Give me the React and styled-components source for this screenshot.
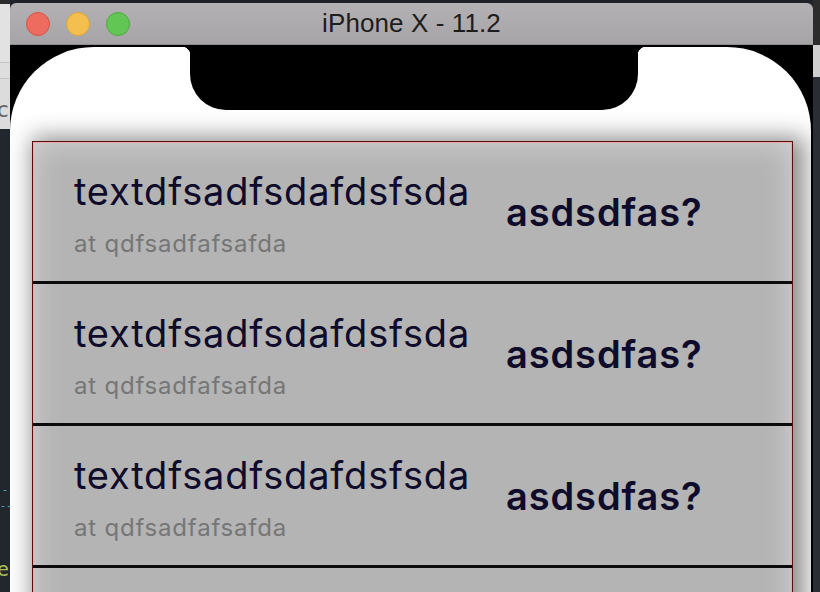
import React from 'react'
import styled, { createGlobalStyle } from 'styled-components'

const GlobalStyle = createGlobalStyle`
  html, body {
    margin: 0;
    padding: 0;
    background: #1f2228;
    overflow: hidden;
  }
`

const Desktop = styled.div`
  display: flex;
  height: 592px;
  overflow: hidden;
  background: #1f2228;
`

const EditorStrip = styled.div`
  width: ${p => p.width}px;
  flex: ${p => (p.grow ? 1 : 'none')};
  display: flex;
  flex-direction: column;
  overflow: hidden;
`

const EditorPane = styled.div`
  height: ${p => p.h}px;
  background: ${p => p.bg};
  border-bottom: ${p => (p.line ? '1px solid #c4c4c4' : 'none')};
  flex: none;
  overflow: hidden;
`

const StrayGlyph = styled.span`
  display: block;
  font-family: 'DejaVu Sans Mono', monospace;
  font-size: ${p => p.size || 14}px;
  line-height: 1;
  color: ${p => p.color};
  margin: ${p => p.m || '0'};
  white-space: nowrap;
`

const Window = styled.div`
  width: 803px;
  flex: none;
  margin-top: 3px;
  display: flex;
  flex-direction: column;
  background: #000;
  border-radius: 6px 6px 0 0;
  overflow: hidden;
`

const TitleBar = styled.div`
  height: 41px;
  flex: none;
  display: grid;
  grid-template-columns: 1fr auto 1fr;
  align-items: center;
  background: linear-gradient(#b3b1b3, #a6a4a6);
  border-bottom: 1px solid #8e8c8e;
`

const Lights = styled.div`
  display: flex;
  gap: 16px;
  padding-left: 16px;
`

const Light = styled.span`
  width: 24px;
  height: 24px;
  box-sizing: border-box;
  border-radius: 50%;
  background: ${p => p.color};
  border: 1px solid ${p => p.edge};
`

const Title = styled.div`
  font-family: 'Liberation Sans', Arial, sans-serif;
  font-size: 26px;
  color: #1d1d1d;
  letter-spacing: 0.1px;
`

const Screen = styled.div`
  position: relative;
  flex: 1;
  margin: 2px 2px 0 0;
  background: #fff;
  border-radius: 84px 84px 0 0;
  padding: 94px 18px 0 22px;
`

const Notch = styled.div`
  position: absolute;
  top: 0;
  left: 180px;
  width: 448px;
  height: 63px;
  background: #000;
  border-radius: 0 0 36px 36px;

  &::before,
  &::after {
    content: '';
    position: absolute;
    top: 0;
    width: 8px;
    height: 8px;
  }
  &::before {
    left: -8px;
    background: radial-gradient(circle at 0 100%, transparent 8px, #000 8.5px);
  }
  &::after {
    right: -8px;
    background: radial-gradient(circle at 100% 100%, transparent 8px, #000 8.5px);
  }
`

const List = styled.div`
  border: 1px solid #5c0d10;
  background: #b4b4b4;
  box-shadow: inset 0 0 0 1px #eaa7a7, inset 0 0 30px rgba(255, 255, 255, 0.45),
    6px 2px 22px 6px rgba(0, 0, 0, 0.45);
`

const Row = styled.div`
  height: 139px;
  display: flex;
  padding-left: 41px;
  border-bottom: 3px solid #0b0b0b;
`

const Info = styled.div`
  width: 432px;
  padding-top: 27px;
  font-family: Inter, 'Noto Sans', sans-serif;
`

const Name = styled.div`
  font-size: 38px;
  line-height: 44px;
  color: #0e0b2b;
  letter-spacing: 0.8px;
`

const Place = styled.div`
  margin-top: 17px;
  font-size: 24px;
  line-height: 28px;
  color: #767676;
  letter-spacing: 0.8px;
`

const Question = styled.div`
  align-self: center;
  font-family: Inter, 'Noto Sans', sans-serif;
  font-size: 38px;
  font-weight: 600;
  color: #0e0b2b;
  letter-spacing: 0.9px;
`

const items = [1, 2, 3, 4].map(id => ({
  id,
  name: 'textdfsadfsdafdsfsda',
  place: 'at qdfsadfafsafda',
  question: 'asdsdfas?'
}))

const App = () => (
  <Desktop>
    <GlobalStyle />
    <EditorStrip width={10}>
      <EditorPane h={4} bg="#2a2a2a" />
      <EditorPane h={58} bg="#e2e2e2" line />
      <EditorPane h={15} bg="#dedede" line />
      <EditorPane h={50} bg="#dcdcdc">
        <StrayGlyph size={22} color="#666" m="20px 0 0 -4px">c</StrayGlyph>
      </EditorPane>
      <EditorPane h={356} bg="#22262d" />
      <EditorPane h={109} bg="#22262d">
        <StrayGlyph size={10} color="#5fb3c9" m="0 0 0 2px">-</StrayGlyph>
        <StrayGlyph size={10} color="#5fb3c9" m="6px 0 0 0">--</StrayGlyph>
        <StrayGlyph size={20} color="#a9c05b" m="48px 0 0 -3px">ev</StrayGlyph>
      </EditorPane>
    </EditorStrip>

    <Window>
      <TitleBar>
        <Lights>
          <Light color="#ee6b5f" edge="#d5554a" />
          <Light color="#f5bf4f" edge="#d9a33c" />
          <Light color="#62c655" edge="#4fa941" />
        </Lights>
        <Title>iPhone X - 11.2</Title>
        <div />
      </TitleBar>
      <Screen>
        <Notch />
        <List>
          {items.map(item => (
            <Row key={item.id}>
              <Info>
                <Name>{item.name}</Name>
                <Place>{item.place}</Place>
              </Info>
              <Question>{item.question}</Question>
            </Row>
          ))}
        </List>
      </Screen>
    </Window>

    <EditorStrip grow>
      <EditorPane h={45} bg="#2c2c2c" />
      <EditorPane h={32} bg="#cfcfcf" />
      <EditorPane h={515} bg="#2a2d33" />
    </EditorStrip>
  </Desktop>
)

export default App
